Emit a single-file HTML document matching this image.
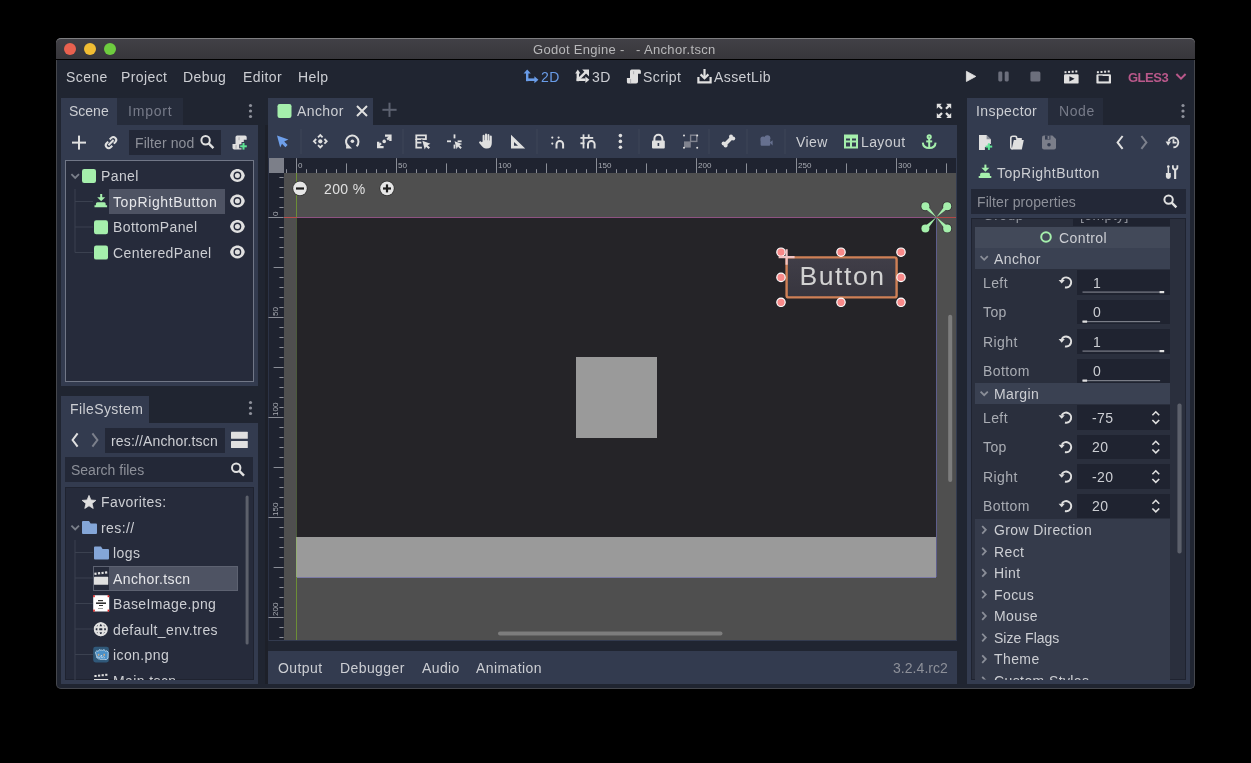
<!DOCTYPE html>
<html><head><meta charset="utf-8"><style>
*{box-sizing:border-box;margin:0;padding:0}
html,body{width:1251px;height:763px;background:#000;overflow:hidden;font-family:"Liberation Sans",sans-serif;font-size:14px;color:#ccced3;position:relative}
div{position:absolute}
#ov{position:absolute;left:0;top:0;width:1251px;height:763px;overflow:visible}
.t{white-space:nowrap;line-height:16px;will-change:transform;letter-spacing:0.4px}
.dim{color:#8d9099}
</style></head><body>
<div style="left:56px;top:38px;width:1139px;height:651px;background:#202531;border-radius:5px;border:1px solid #45474d;border-top:none"></div>
<div style="left:56px;top:38px;width:1139px;height:22px;background:linear-gradient(#414046,#37363b);border-top:1px solid #7e7e80;border-radius:5px 5px 0 0;border-bottom:1px solid #000"></div>
<div style="left:64px;top:43px;width:12px;height:12px;background:#e9614f;border-radius:50%"></div>
<div style="left:84px;top:43px;width:12px;height:12px;background:#f1bd33;border-radius:50%"></div>
<div style="left:104px;top:43px;width:12px;height:12px;background:#6ecc3f;border-radius:50%"></div>
<div class="t" style="left:533px;top:41.5px;color:#b8b8ba;font-size:13px;letter-spacing:0.3px">Godot Engine -</div>
<div class="t" style="left:635.5px;top:41.5px;color:#b8b8ba;font-size:13px;letter-spacing:0.35px">- Anchor.tscn</div>
<div class="t" style="left:66px;top:69px;">Scene</div>
<div class="t" style="left:121px;top:69px;">Project</div>
<div class="t" style="left:183px;top:69px;">Debug</div>
<div class="t" style="left:243px;top:69px;">Editor</div>
<div class="t" style="left:298px;top:69px;">Help</div>
<div class="t" style="left:541px;top:69px;color:#699ce8;">2D</div>
<div class="t" style="left:592px;top:69px;">3D</div>
<div class="t" style="left:643px;top:69px;">Script</div>
<div class="t" style="left:714px;top:69px;">AssetLib</div>
<div class="t" style="left:1128px;top:70px;color:#b9588a;font-size:13px;font-weight:bold;letter-spacing:-0.5px">GLES3</div>
<div style="left:61px;top:98px;width:56px;height:27px;background:#333b4f;"></div>
<div style="left:117px;top:98px;width:66px;height:27px;background:#262c3b;"></div>
<div class="t" style="left:69px;top:103px;letter-spacing:0px">Scene</div>
<div class="t" style="left:128px;top:103px;color:#777b89;letter-spacing:0.8px">Import</div>
<div style="left:61px;top:125px;width:197px;height:261px;background:#333b4f;"></div>
<div style="left:129px;top:130px;width:92px;height:25px;background:#232837;"></div>
<div class="t" style="left:135px;top:135px;color:#8d9099;letter-spacing:0.1px">Filter nod</div>
<div style="left:65px;top:160px;width:189px;height:222px;background:#262b3b;border:1px solid #717787"></div>
<div class="t" style="left:101px;top:168px;">Panel</div>
<div style="left:109px;top:189px;width:116px;height:25px;background:#4e5363;"></div>
<div class="t" style="left:113px;top:194px;color:#e6e7ea;letter-spacing:0.62px">TopRightButton</div>
<div class="t" style="left:113px;top:219px;">BottomPanel</div>
<div class="t" style="left:113px;top:245px;">CenteredPanel</div>
<div style="left:61px;top:396px;width:88px;height:27px;background:#333b4f;"></div>
<div class="t" style="left:70px;top:401px;">FileSystem</div>
<div style="left:61px;top:423px;width:197px;height:261px;background:#333b4f;"></div>
<div style="left:105px;top:428px;width:120px;height:25px;background:#232837;"></div>
<div class="t" style="left:111px;top:433px;letter-spacing:0.15px">res://Anchor.tscn</div>
<div style="left:65px;top:457px;width:188px;height:25px;background:#232837;"></div>
<div class="t" style="left:71px;top:462px;color:#8d9099;letter-spacing:0px">Search files</div>
<div style="left:65px;top:487px;width:189px;height:193px;background:#262b3b;border:1px solid #1f2330"></div>
<div class="t" style="left:101px;top:494px;">Favorites:</div>
<div class="t" style="left:101px;top:520px;">res://</div>
<div class="t" style="left:113px;top:545px;">logs</div>
<div style="left:93px;top:566px;width:145px;height:25px;background:#262b3b;border:1px solid #5d6271"></div>
<div style="left:109px;top:567px;width:128px;height:23px;background:#4e5363;"></div>
<div class="t" style="left:113px;top:571px;color:#e6e7ea;">Anchor.tscn</div>
<div class="t" style="left:113px;top:596px;">BaseImage.png</div>
<div class="t" style="left:113px;top:622px;">default_env.tres</div>
<div class="t" style="left:113px;top:647px;">icon.png</div>
<div style="left:113px;top:672px;width:100px;height:8px;overflow:hidden"><div class="t" style="left:0;top:1px">Main.tscn</div></div>
<div style="left:268px;top:98px;width:105px;height:27px;background:#333b4f;"></div>
<div class="t" style="left:297px;top:103px;">Anchor</div>
<div style="left:268px;top:125px;width:689px;height:33px;background:#333b4f;"></div>
<div style="left:265px;top:125px;width:3px;height:559px;background:#1d2029;"></div>
<div style="left:268px;top:158px;width:689px;height:483px;background:#333b4f;"></div>
<div style="left:268px;top:158px;width:688px;height:482px;background:#1f2330;"></div>
<div style="left:268px;top:158px;width:1px;height:483px;background:#2c3346;"></div>
<div style="left:269px;top:158px;width:15px;height:15px;background:#7c7f89;"></div>
<div style="left:284px;top:173px;width:672px;height:467px;background:#4f4f4f;"></div>
<div style="left:297px;top:218px;width:639px;height:319px;background:#252428;"></div>
<div style="left:297px;top:537px;width:639px;height:40px;background:#9a9a9a;"></div>
<div style="left:576px;top:357px;width:81px;height:81px;background:#9a9a9a;"></div>
<div class="t" style="left:796px;top:134px;">View</div>
<div class="t" style="left:861px;top:134px;">Layout</div>
<div class="t" style="left:324px;top:181px;color:#e0e0e0;">200 %</div>
<div style="left:268px;top:651px;width:689px;height:33px;background:#333b4f;"></div>
<div class="t" style="left:278px;top:660px;">Output</div>
<div class="t" style="left:340px;top:660px;">Debugger</div>
<div class="t" style="left:422px;top:660px;">Audio</div>
<div class="t" style="left:476px;top:660px;">Animation</div>
<div class="t" style="left:893px;top:659.5px;color:#8d9099;letter-spacing:0.05px">3.2.4.rc2</div>
<div style="left:967px;top:98px;width:81px;height:27px;background:#333b4f;"></div>
<div style="left:1048px;top:98px;width:55px;height:27px;background:#262c3b;"></div>
<div class="t" style="left:976px;top:103px;">Inspector</div>
<div class="t" style="left:1059px;top:103px;color:#777b89;letter-spacing:0.6px">Node</div>
<div style="left:967px;top:125px;width:223px;height:559px;background:#333b4f;"></div>
<div class="t" style="left:997px;top:165px;letter-spacing:0.5px">TopRightButton</div>
<div style="left:971px;top:189px;width:215px;height:25px;background:#232837;"></div>
<div class="t" style="left:977px;top:194px;color:#8d9099;letter-spacing:0.1px">Filter properties</div>
<div style="left:971px;top:218px;width:215px;height:462px;background:#2a2f3d;border:1px solid #1f2330"></div>
<div style="left:972px;top:219px;width:213px;height:460px;overflow:hidden"><div class="t" style="left:11px;top:-12px;color:#8d9099">Group</div><div style="left:101px;top:-1px;width:97px;height:8px;background:#1f2330"></div><div class="t" style="left:108px;top:-12px;color:#8d9099">[empty]</div></div>
<div style="left:975px;top:226.5px;width:195px;height:21.3px;background:#424959;"></div>
<div class="t" style="left:1058.5px;top:229.5px;">Control</div>
<div style="left:975px;top:247.8px;width:195px;height:21.3px;background:#3a4152;"></div>
<div class="t" style="left:994.3px;top:250.6px;">Anchor</div>
<div style="left:1076.6px;top:270px;width:93.4px;height:24.8px;background:#1f2330;"></div>
<div class="t" style="left:982.8px;top:274.6px;color:#a9acb3;">Left</div>
<div class="t" style="left:1093px;top:274.6px;">1</div>
<div style="left:1076.6px;top:299.5px;width:93.4px;height:24.8px;background:#1f2330;"></div>
<div class="t" style="left:982.8px;top:304.1px;color:#a9acb3;">Top</div>
<div class="t" style="left:1093px;top:304.1px;">0</div>
<div style="left:1076.6px;top:329px;width:93.4px;height:24.8px;background:#1f2330;"></div>
<div class="t" style="left:982.8px;top:333.6px;color:#a9acb3;">Right</div>
<div class="t" style="left:1093px;top:333.6px;">1</div>
<div style="left:1076.6px;top:358.5px;width:93.4px;height:24.8px;background:#1f2330;"></div>
<div class="t" style="left:982.8px;top:363.1px;color:#a9acb3;">Bottom</div>
<div class="t" style="left:1093px;top:363.1px;">0</div>
<div style="left:975px;top:383.2px;width:195px;height:21.3px;background:#3a4152;"></div>
<div class="t" style="left:994.3px;top:386px;">Margin</div>
<div style="left:1076.6px;top:405.2px;width:93.4px;height:24.8px;background:#1f2330;"></div>
<div class="t" style="left:982.8px;top:409.8px;color:#a9acb3;">Left</div>
<div class="t" style="left:1092.4px;top:409.8px;">-75</div>
<div style="left:1076.6px;top:434.7px;width:93.4px;height:24.8px;background:#1f2330;"></div>
<div class="t" style="left:982.8px;top:439.3px;color:#a9acb3;">Top</div>
<div class="t" style="left:1092.4px;top:439.3px;">20</div>
<div style="left:1076.6px;top:464.2px;width:93.4px;height:24.8px;background:#1f2330;"></div>
<div class="t" style="left:982.8px;top:468.8px;color:#a9acb3;">Right</div>
<div class="t" style="left:1092.4px;top:468.8px;">-20</div>
<div style="left:1076.6px;top:493.7px;width:93.4px;height:24.8px;background:#1f2330;"></div>
<div class="t" style="left:982.8px;top:498.3px;color:#a9acb3;">Bottom</div>
<div class="t" style="left:1092.4px;top:498.3px;">20</div>
<div style="left:975px;top:518.7px;width:195px;height:161px;background:#353b4b;"></div>
<div style="left:975px;top:518px;width:195px;height:161.5px;overflow:hidden"><div class="t" style="left:19.1px;top:4.00px;">Grow Direction</div><div class="t" style="left:19.1px;top:25.55px;">Rect</div><div class="t" style="left:19.1px;top:47.10px;">Hint</div><div class="t" style="left:19.1px;top:68.65px;">Focus</div><div class="t" style="left:19.1px;top:90.20px;">Mouse</div><div class="t" style="left:19.1px;top:111.75px;letter-spacing:0">Size Flags</div><div class="t" style="left:19.1px;top:133.30px;">Theme</div><div class="t" style="left:19.1px;top:154.85px;">Custom Styles</div></div>
<svg id="ov" width="1251" height="763" viewBox="0 0 1251 763">
<g fill="#699ce8"><rect x="526" y="72" width="2.4" height="9.2"/><rect x="526" y="78.4" width="9" height="2.6"/><path d="M523.6 73.6 L527.2 69.4 L530.8 73.6Z"/><path d="M534.4 76.2 L538.4 79.7 L534.4 83.2Z"/></g>
<g fill="#e0e0e0"><rect x="576.6" y="72" width="2.4" height="9.2"/><rect x="576.6" y="78.4" width="9" height="2.6"/><path d="M575.2 73.6 L577.8 69.4 L580.4 73.6Z"/><path d="M585.4 76.4 L589.4 79.7 L585.4 83Z"/><path d="M578.4 79.4 L586 71.8" stroke="#e0e0e0" stroke-width="2.4"/><path d="M582.2 69.6 L589 69.6 L589 76.4Z"/></g>
<path fill="#e0e0e0" d="M631.8 69.5 h7.4 a1.7 1.7 0 0 1 1.7 1.7 v2.6 h-2.9 v8 a1.8 1.8 0 0 1 -1.8 1.8 h-7.6 a1.7 1.7 0 0 1 -1.7 -1.7 v-3.8 h3.1 v-6.9 a1.7 1.7 0 0 1 1.8 -1.7Z"/>
<g fill="#a9a9ad"><rect x="633.2" y="71.2" width="0.9" height="3"/><rect x="630.2" y="79" width="0.9" height="4"/></g>
<g fill="none" stroke="#e0e0e0" stroke-width="2.2"><path d="M698.4 77 v5.4 h12.2 v-5.4"/><path d="M704.5 69 v9"/><path d="M700.6 74.4 l3.9 3.9 l3.9 -3.9"/></g>
<path fill="#e0e0e0" d="M966.4 71.3 L975.8 76.4 L966.4 81.5Z" stroke="#e0e0e0" stroke-width="0.8" stroke-linejoin="round"/>
<g fill="#6c6f7c"><rect x="998.3" y="71.6" width="4" height="9.8" rx="1.3"/><rect x="1004.7" y="71.6" width="4" height="9.8" rx="1.3"/><rect x="1030.4" y="71.6" width="10" height="9.8" rx="1.5"/></g>
<g fill="#e0e0e0"><rect x="1064.5" y="71.20" width="2" height="2"/><rect x="1068.1" y="70.95" width="2" height="2"/><rect x="1071.7" y="70.70" width="2" height="2"/><rect x="1075.3" y="70.45" width="2" height="2"/><rect x="1064" y="74.19999999999999" width="14.6" height="9.4" rx="1.2"/></g><path fill="#202531" d="M1069.4 76.2 L1074.6 78.8 L1069.4 81.4Z"/>
<g fill="#e0e0e0"><rect x="1096.9" y="71.20" width="2" height="2"/><rect x="1100.5" y="70.95" width="2" height="2"/><rect x="1104.1" y="70.70" width="2" height="2"/><rect x="1107.7" y="70.45" width="2" height="2"/><rect x="1096.4" y="74.19999999999999" width="14.6" height="9.4" rx="1.2"/></g><rect fill="#202531" x="1098.6" y="76" width="10.2" height="5.4"/><rect fill="#202531" x="1098.6" y="75.6" width="4" height="1"/>
<path fill="none" stroke="#b9588a" stroke-width="2" d="M1176.4 74 l4.6 4.6 l4.6 -4.6"/>
<g fill="#8e919b"><circle cx="250.5" cy="105.5" r="1.6"/><circle cx="250.5" cy="111" r="1.6"/><circle cx="250.5" cy="116.5" r="1.6"/></g>
<g fill="#8e919b"><circle cx="250.5" cy="402.5" r="1.6"/><circle cx="250.5" cy="408" r="1.6"/><circle cx="250.5" cy="413.5" r="1.6"/></g>
<g fill="#8e919b"><circle cx="1183" cy="105.5" r="1.6"/><circle cx="1183" cy="111" r="1.6"/><circle cx="1183" cy="116.5" r="1.6"/></g>
<g fill="#e0e0e0"><rect x="72" y="141.6" width="14" height="2"/><rect x="78" y="135.6" width="2" height="14"/></g>
<g fill="none" stroke="#e0e0e0" stroke-width="2"><path d="M108.2 141.6 l-1.6 1.6 a2.9 2.9 0 0 0 4.1 4.1 l1.6 -1.6"/><path d="M113.8 143.6 l1.6 -1.6 a2.9 2.9 0 0 0 -4.1 -4.1 l-1.6 1.6"/><path d="M108.4 145.2 l5.2 -5.2"/></g>
<g fill="none" stroke="#e0e0e0" stroke-width="2"><circle cx="205.6" cy="140.3" r="4.2"/><path d="M208.4 143.10000000000002 l5 5" stroke-width="2.4"/></g>
<g fill="none" stroke="#e0e0e0" stroke-width="2"><circle cx="236.2" cy="467.8" r="4.2"/><path d="M239.0 470.6 l5 5" stroke-width="2.4"/></g>
<g fill="none" stroke="#e0e0e0" stroke-width="2"><circle cx="1168.6" cy="199.6" r="4.2"/><path d="M1171.3999999999999 202.4 l5 5" stroke-width="2.4"/></g>
<path fill="#e0e0e0" d="M237.2 135.5 h7.8 a1.7 1.7 0 0 1 1.7 1.7 v2.5 h-2.9 v8 a1.7 1.7 0 0 1 -1.7 1.7 h-7.9 a1.7 1.7 0 0 1 -1.7 -1.7 v-3.6 h3 v-6.9 a1.7 1.7 0 0 1 1.7 -1.7Z"/>
<g fill="#a9a9ad"><rect x="238.6" y="137.2" width="0.9" height="3"/><rect x="235.6" y="145" width="0.9" height="3.6"/></g>
<g fill="#333b4f"><rect x="239.2" y="144.3" width="8.6" height="4"/><rect x="241.5" y="142" width="4" height="8.6"/></g>
<g fill="#5fe596"><rect x="240.2" y="145.3" width="6.6" height="2"/><rect x="242.5" y="143" width="2" height="6.6"/></g>
<path fill="none" stroke="#7a7f8a" stroke-width="1.8" d="M71.4 174.2 l3.8 3.8 l3.8 -3.8"/>
<path fill="none" stroke="#7a7f8a" stroke-width="1.8" d="M71.4 525.6 l3.8 3.8 l3.8 -3.8"/>
<g stroke="#3b4150" stroke-width="1" fill="none"><path d="M75 189 V252.5 M75 201.5 H93 M75 227 H93 M75 252.5 H93"/><path d="M75 540 V680 M75 552.5 H93 M75 578 H93 M75 603.5 H93 M75 629 H93 M75 654.5 H93"/></g>
<rect x="82" y="169" width="14" height="14" rx="2.2" fill="#a5efac"/>
<rect x="94" y="220.3" width="14" height="14" rx="2.2" fill="#a5efac"/>
<rect x="94" y="245.6" width="14" height="14" rx="2.2" fill="#a5efac"/>
<rect x="277.5" y="104" width="14" height="14" rx="2.2" fill="#a5efac"/>
<g fill="#a5efac"><rect x="100.2" y="194" width="2" height="4"/><path d="M97.2 197.2 h8 l-4 4z"/><path d="M97.8 202.2 h6.4 a1.5 1.5 0 0 1 1.5 1.5 v1.6 h1.4 v2 h-12.6 v-2 h1.4 v-1.6 a1.5 1.5 0 0 1 1.5 -1.5z"/></g>
<g fill="#a5efac"><rect x="984.4" y="164.6" width="2" height="4"/><path d="M981.4 167.79999999999998 h8 l-4 4z"/><path d="M982 172.79999999999998 h6.4 a1.5 1.5 0 0 1 1.5 1.5 v1.6 h1.4 v2 h-12.6 v-2 h1.4 v-1.6 a1.5 1.5 0 0 1 1.5 -1.5z"/></g>
<g><path fill="#e0e0e0" d="M230.0 175.5 C231.8 166.9 243.0 166.9 244.8 175.5 C243.0 184.1 231.8 184.1 230.0 175.5Z"/><circle cx="237.4" cy="175.5" r="3.9" fill="#262b3b"/><circle cx="237.4" cy="175.5" r="2.5" fill="#e0e0e0"/></g>
<g><path fill="#e0e0e0" d="M230.0 201.0 C231.8 192.4 243.0 192.4 244.8 201.0 C243.0 209.6 231.8 209.6 230.0 201.0Z"/><circle cx="237.4" cy="201.0" r="3.9" fill="#262b3b"/><circle cx="237.4" cy="201.0" r="2.5" fill="#e0e0e0"/></g>
<g><path fill="#e0e0e0" d="M230.0 226.5 C231.8 217.9 243.0 217.9 244.8 226.5 C243.0 235.1 231.8 235.1 230.0 226.5Z"/><circle cx="237.4" cy="226.5" r="3.9" fill="#262b3b"/><circle cx="237.4" cy="226.5" r="2.5" fill="#e0e0e0"/></g>
<g><path fill="#e0e0e0" d="M230.0 252.0 C231.8 243.4 243.0 243.4 244.8 252.0 C243.0 260.6 231.8 260.6 230.0 252.0Z"/><circle cx="237.4" cy="252.0" r="3.9" fill="#262b3b"/><circle cx="237.4" cy="252.0" r="2.5" fill="#e0e0e0"/></g>
<path fill="none" stroke="#e0e0e0" stroke-width="2" d="M77.6 433.4 L72.6 440 L77.6 446.6"/>
<path fill="none" stroke="#7c808c" stroke-width="2" d="M92.4 433.4 L97.4 440 L92.4 446.6"/>
<g fill="#e0e0e0"><rect x="231" y="431.8" width="16.8" height="7" rx="0.5"/><rect x="231" y="441" width="16.8" height="7" rx="0.5"/></g>
<polygon fill="#e0e0e0" points="89.00,495.40 90.88,500.01 95.85,500.38 92.04,503.59 93.23,508.42 89.00,505.80 84.77,508.42 85.96,503.59 82.15,500.38 87.12,500.01" stroke="#e0e0e0" stroke-width="0.8" stroke-linejoin="round"/>
<path fill="#84a6d8" d="M82 522 a1 1 0 0 1 1 -1 h6 l1.6 2.4 h5.4 a1 1 0 0 1 1 1 v8.6 a1 1 0 0 1 -1 1 h-13 a1 1 0 0 1 -1 -1z"/>
<path fill="#84a6d8" d="M94 547.6 a1 1 0 0 1 1 -1 h6 l1.6 2.4 h5.4 a1 1 0 0 1 1 1 v8.6 a1 1 0 0 1 -1 1 h-13 a1 1 0 0 1 -1 -1z"/>
<g fill="#e0e0e0"><rect x="94.4" y="572.60" width="2.2" height="2.2" transform="rotate(-8 95.5 573.7)"/><rect x="98.0" y="572.20" width="2.2" height="2.2" transform="rotate(-8 99.1 573.7)"/><rect x="101.6" y="571.80" width="2.2" height="2.2" transform="rotate(-8 102.7 573.7)"/><rect x="105.2" y="571.40" width="2.2" height="2.2" transform="rotate(-8 106.3 573.7)"/><rect x="94" y="576.8000000000001" width="14.2" height="8" rx="0.6"/></g>
<rect x="93.2" y="595.2" width="16" height="16.4" rx="1.2" fill="#ffffff"/>
<g fill="#e02020"><rect x="93.2" y="595.2" width="1.6" height="2"/><rect x="107.6" y="595.2" width="1.6" height="2"/><rect x="93.2" y="609.6" width="1.6" height="2"/><rect x="107.6" y="609.6" width="1.6" height="2"/></g>
<g fill="#333"><rect x="98" y="600" width="5" height="1.2"/><rect x="96" y="602.4" width="10" height="1.6"/><rect x="99" y="605" width="4" height="1"/><rect x="98" y="608.2" width="5" height="0.8" fill="#888"/></g>
<g fill="none" stroke="#e0e0e0" stroke-width="1.9"><circle cx="100.8" cy="629.2" r="6.1"/><ellipse cx="100.8" cy="629.2" rx="2.5" ry="6.1"/><path d="M94.8 627.2 h12 M94.8 631.2 h12"/></g>
<rect x="93.2" y="646.7" width="15.7" height="15.7" rx="2.4" fill="#30597a"/>
<path fill="#4a90c8" stroke="#b8d4ea" stroke-width="0.9" d="M95.4 652.2 l1.4 -1.4 l1.4 0.6 l1.2 -1.8 l1.6 0.8 l0.8 -0.4 l0.8 0.4 l1.6 -0.8 l1.2 1.8 l1.4 -0.6 l1.4 1.4 l-0.2 6 q-1.2 1.8 -3 1.4 l-1 -0.6 l-1 0.6 l-1 -0.6 l-1 0.6 l-1 -0.6 q-1.8 0.4 -3 -1.4z"/>
<g fill="#c9a684"><rect x="97.8" y="653.8" width="1.6" height="2"/><rect x="103.4" y="653.8" width="1.6" height="2"/></g><circle cx="101.4" cy="655.8" r="0.8" fill="#d8e8f4"/>
<path fill="none" stroke="#c8dcee" stroke-width="0.8" d="M96.4 657.6 l1.4 -0.8 l1.4 0.8 l1.4 -0.8 l1.4 0.8 l1.4 -0.8 l1.4 0.8"/>
<g fill="#e0e0e0"><rect x="94.4" y="675" width="2.2" height="2"/><rect x="98" y="674.6" width="2.2" height="2"/><rect x="101.6" y="674.2" width="2.2" height="2"/><rect x="105.2" y="673.8" width="2.2" height="2"/><rect x="94" y="679" width="14.2" height="1"/></g>
<rect x="245.6" y="495.5" width="3" height="149" rx="1.5" fill="#5c606b"/>
<path stroke="#e0e0e0" stroke-width="2" d="M357 106 L367 116 M367 106 L357 116"/>
<g fill="#5d6270"><rect x="382.4" y="108.8" width="14.2" height="2"/><rect x="388.5" y="102.7" width="2" height="14.2"/></g>
<g fill="#e0e0e0"><path d="M936.8 103.8 h5 l-1.6 1.6 l2.6 2.6 l-1.6 1.6 l-2.6 -2.6 l-1.8 1.8z"/><path d="M951.2 103.8 h-5 l1.6 1.6 l-2.6 2.6 l1.6 1.6 l2.6 -2.6 l1.8 1.8z"/><path d="M936.8 118 h5 l-1.6 -1.6 l2.6 -2.6 l-1.6 -1.6 l-2.6 2.6 l-1.8 -1.8z"/><path d="M951.2 118 h-5 l1.6 -1.6 l-2.6 -2.6 l1.6 -1.6 l2.6 2.6 l1.8 -1.8z"/></g>
<rect x="300.5" y="129" width="1" height="25" fill="#3f4658"/>
<rect x="402.5" y="129" width="1" height="25" fill="#3f4658"/>
<rect x="536.5" y="129" width="1" height="25" fill="#3f4658"/>
<rect x="638.5" y="129" width="1" height="25" fill="#3f4658"/>
<rect x="708.5" y="129" width="1" height="25" fill="#3f4658"/>
<rect x="746.5" y="129" width="1" height="25" fill="#3f4658"/>
<rect x="784.5" y="129" width="1" height="25" fill="#3f4658"/>
<path fill="#6e9fea" d="M277 135.4 L288.4 139.6 L284.2 141.6 L287.6 145 L285.4 147.2 L282 143.8 L280.2 147.6Z"/>
<g><circle cx="320.3" cy="141.3" r="2.1" fill="#e0e0e0"/><g fill="none" stroke="#e0e0e0" stroke-width="1.8"><path d="M318 137.4 l2.3 -2.3 l2.3 2.3"/><path d="M318 145.2 l2.3 2.3 l2.3 -2.3"/><path d="M316.2 139 l-2.3 2.3 l2.3 2.3"/><path d="M324.4 139 l2.3 2.3 l-2.3 2.3"/></g></g>
<g><path fill="none" stroke="#e0e0e0" stroke-width="2" d="M348.4 146.6 A6.2 6.2 0 1 1 356.6 146.2"/><circle cx="352.4" cy="141.2" r="1.8" fill="#e0e0e0"/><path fill="#e0e0e0" d="M346 148.6 L352 148.6 L346.6 142.8Z"/></g>
<g fill="#e0e0e0"><path d="M391.6 134.4 v6.6 h-2.4 v-4.2 h-4.2 v-2.4z"/><path d="M377 148.3 v-6.6 h2.4 v4.2 h4.2 v2.4z"/><path d="M389.6 135.6 l1.6 1.6 l-3.2 3.2 l-1.6 -1.6z M378.6 147.2 l-1.6 -1.6 l3.2 -3.2 l1.6 1.6z"/><circle cx="384.2" cy="141.4" r="1.8"/></g>
<g fill="none" stroke="#e0e0e0" stroke-width="1.8"><path d="M416.3 135.3 h9.6 v3.9 h-9.6z"/><path d="M416.3 139 v8.6 h5.6"/><path d="M416.3 142.6 h5.2"/></g>
<path fill="#333b4f" stroke="#333b4f" stroke-width="2" d="M422.4 140.8 L430.4 143.8 L427.6 145.2 L430 147.6 L428.5 149.1 L426.1 146.7 L424.7 149.4Z"/>
<path fill="#e0e0e0" d="M422.4 140.8 L430.4 143.8 L427.6 145.2 L430 147.6 L428.5 149.1 L426.1 146.7 L424.7 149.4Z"/>
<g fill="#e0e0e0"><rect x="453.6" y="134.4" width="1.8" height="4"/><rect x="447" y="140.4" width="4" height="1.8"/><rect x="457.6" y="140.4" width="4" height="1.8"/><rect x="453.6" y="144.6" width="1.8" height="4"/><path d="M454.6 141.2 L462.2 144 L459.4 145.3 L461.8 147.6 L460.4 149 L458 146.6 L456.6 149.2Z"/></g>
<path fill="#e0e0e0" d="M482.6 141.4 v-5.6 a1 1 0 0 1 2 0 v4.4 h0.4 v-5.8 a1 1 0 0 1 2 0 v5.8 h0.4 v-5.2 a1 1 0 0 1 2 0 v5.4 h0.4 v-3.8 a1 1 0 0 1 2 0 v6.4 q0 5.6 -5 5.6 h-1 q-2 0 -3.6 -2 l-3 -3.6 q-0.6 -1.2 0.6 -1.6 q1 -0.2 2 0.8z"/>
<path fill="#e0e0e0" fill-rule="evenodd" d="M511 134.8 L525.2 148.6 H511Z M514 142 V145.8 H518Z"/>
<g fill="#e0e0e0"><circle cx="552.3" cy="137.6" r="1.1"/><circle cx="558.6" cy="137.6" r="1.1"/><circle cx="552.3" cy="143.6" r="1.1"/></g>
<path fill="none" stroke="#e0e0e0" stroke-width="2" d="M556.5 148.4 v-4.2 a3.3 3.3 0 0 1 6.6 0 v4.2"/>
<g fill="#e0e0e0"><rect x="580.4" y="137" width="12.8" height="1.8"/><rect x="580.4" y="142.4" width="4" height="1.8"/><rect x="582.6" y="134.4" width="1.8" height="14"/><rect x="587.8" y="134.4" width="1.8" height="4"/></g>
<path fill="none" stroke="#e0e0e0" stroke-width="2" d="M588 148.4 v-4.2 a3.3 3.3 0 0 1 6.6 0 v4.2"/>
<g fill="#e0e0e0"><circle cx="620.4" cy="135.6" r="1.8"/><circle cx="620.4" cy="141.4" r="1.8"/><circle cx="620.4" cy="147.2" r="1.8"/></g>
<g><path fill="none" stroke="#e0e0e0" stroke-width="2" d="M654.4 141 v-2.2 a4 4 0 0 1 8 0 v2.2"/><rect x="652" y="140.4" width="12.8" height="8.2" rx="1" fill="#e0e0e0"/><rect x="657.6" y="143" width="1.6" height="3" fill="#333b4f"/></g>
<g fill="#80838f"><rect x="684" y="141.4" width="6.8" height="6.2"/></g><g fill="none" stroke="#80838f" stroke-width="1.4"><rect x="690.6" y="135.2" width="6.2" height="6.2"/></g>
<g fill="#e0e0e0"><circle cx="684" cy="135.4" r="1"/><circle cx="697.2" cy="135.4" r="1"/><circle cx="684" cy="147.8" r="1"/><circle cx="697.2" cy="147.8" r="1"/></g>
<g fill="#e0e0e0"><path d="M724.8 143.2 l5.4 -5.4 l1.8 1.8 l-5.4 5.4z"/><circle cx="723.6" cy="143.4" r="2"/><circle cx="725.6" cy="145.6" r="2"/><circle cx="731" cy="136.6" r="2"/><circle cx="733.2" cy="138.6" r="2"/></g>
<path stroke="#e0e0e0" stroke-width="3.4" d="M724.2 145.2 L732.2 137.2"/>
<g fill="#66708f"><circle cx="763" cy="139" r="2.6"/><circle cx="767.4" cy="138.2" r="3"/><rect x="760.6" y="139.4" width="9.6" height="6.4" rx="1"/><path d="M769.6 142.6 l3 -2.4 v5.2z"/></g>
<g fill="none" stroke="#a5efac" stroke-width="2"><rect x="845" y="135.5" width="12" height="12"/><path d="M851 136 V147 M845.5 141.5 H856.5"/></g>
<rect x="845" y="135.5" width="12" height="3" fill="#a5efac"/>
<g fill="none" stroke="#a5efac" stroke-width="2"><circle cx="929.2" cy="136.8" r="1.6"/><path d="M929.2 138.6 V148"/><path d="M922.8 142.6 q0.4 5.4 6.4 5.4 q6 0 6.4 -5.4"/><path d="M926.2 141.4 H932.2"/></g>
<g fill="#8a8d96"><rect x="286.0" y="169.2" width="1" height="3.8"/><rect x="296.0" y="158.2" width="1" height="14.8"/><rect x="306.0" y="169.2" width="1" height="3.8"/><rect x="316.0" y="169.2" width="1" height="3.8"/><rect x="326.0" y="169.2" width="1" height="3.8"/><rect x="336.0" y="169.2" width="1" height="3.8"/><rect x="346.0" y="163.4" width="1" height="9.6"/><rect x="356.0" y="169.2" width="1" height="3.8"/><rect x="366.0" y="169.2" width="1" height="3.8"/><rect x="376.0" y="169.2" width="1" height="3.8"/><rect x="386.0" y="169.2" width="1" height="3.8"/><rect x="396.0" y="158.2" width="1" height="14.8"/><rect x="406.0" y="169.2" width="1" height="3.8"/><rect x="416.0" y="169.2" width="1" height="3.8"/><rect x="426.0" y="169.2" width="1" height="3.8"/><rect x="436.0" y="169.2" width="1" height="3.8"/><rect x="446.0" y="163.4" width="1" height="9.6"/><rect x="456.0" y="169.2" width="1" height="3.8"/><rect x="466.0" y="169.2" width="1" height="3.8"/><rect x="476.0" y="169.2" width="1" height="3.8"/><rect x="486.0" y="169.2" width="1" height="3.8"/><rect x="496.0" y="158.2" width="1" height="14.8"/><rect x="506.0" y="169.2" width="1" height="3.8"/><rect x="516.0" y="169.2" width="1" height="3.8"/><rect x="526.0" y="169.2" width="1" height="3.8"/><rect x="536.0" y="169.2" width="1" height="3.8"/><rect x="546.0" y="163.4" width="1" height="9.6"/><rect x="556.0" y="169.2" width="1" height="3.8"/><rect x="566.0" y="169.2" width="1" height="3.8"/><rect x="576.0" y="169.2" width="1" height="3.8"/><rect x="586.0" y="169.2" width="1" height="3.8"/><rect x="596.0" y="158.2" width="1" height="14.8"/><rect x="606.0" y="169.2" width="1" height="3.8"/><rect x="616.0" y="169.2" width="1" height="3.8"/><rect x="626.0" y="169.2" width="1" height="3.8"/><rect x="636.0" y="169.2" width="1" height="3.8"/><rect x="646.0" y="163.4" width="1" height="9.6"/><rect x="656.0" y="169.2" width="1" height="3.8"/><rect x="666.0" y="169.2" width="1" height="3.8"/><rect x="676.0" y="169.2" width="1" height="3.8"/><rect x="686.0" y="169.2" width="1" height="3.8"/><rect x="696.0" y="158.2" width="1" height="14.8"/><rect x="706.0" y="169.2" width="1" height="3.8"/><rect x="716.0" y="169.2" width="1" height="3.8"/><rect x="726.0" y="169.2" width="1" height="3.8"/><rect x="736.0" y="169.2" width="1" height="3.8"/><rect x="746.0" y="163.4" width="1" height="9.6"/><rect x="756.0" y="169.2" width="1" height="3.8"/><rect x="766.0" y="169.2" width="1" height="3.8"/><rect x="776.0" y="169.2" width="1" height="3.8"/><rect x="786.0" y="169.2" width="1" height="3.8"/><rect x="796.0" y="158.2" width="1" height="14.8"/><rect x="806.0" y="169.2" width="1" height="3.8"/><rect x="816.0" y="169.2" width="1" height="3.8"/><rect x="826.0" y="169.2" width="1" height="3.8"/><rect x="836.0" y="169.2" width="1" height="3.8"/><rect x="846.0" y="163.4" width="1" height="9.6"/><rect x="856.0" y="169.2" width="1" height="3.8"/><rect x="866.0" y="169.2" width="1" height="3.8"/><rect x="876.0" y="169.2" width="1" height="3.8"/><rect x="886.0" y="169.2" width="1" height="3.8"/><rect x="896.0" y="158.2" width="1" height="14.8"/><rect x="906.0" y="169.2" width="1" height="3.8"/><rect x="916.0" y="169.2" width="1" height="3.8"/><rect x="926.0" y="169.2" width="1" height="3.8"/><rect x="936.0" y="169.2" width="1" height="3.8"/><rect x="946.0" y="163.4" width="1" height="9.6"/><rect x="279.4" y="177.0" width="4.2" height="1"/><rect x="279.4" y="187.0" width="4.2" height="1"/><rect x="279.4" y="197.0" width="4.2" height="1"/><rect x="279.4" y="207.0" width="4.2" height="1"/><rect x="268.4" y="217.0" width="15.2" height="1"/><rect x="279.4" y="227.0" width="4.2" height="1"/><rect x="279.4" y="237.0" width="4.2" height="1"/><rect x="279.4" y="247.0" width="4.2" height="1"/><rect x="279.4" y="257.0" width="4.2" height="1"/><rect x="273.6" y="267.0" width="10.0" height="1"/><rect x="279.4" y="277.0" width="4.2" height="1"/><rect x="279.4" y="287.0" width="4.2" height="1"/><rect x="279.4" y="297.0" width="4.2" height="1"/><rect x="279.4" y="307.0" width="4.2" height="1"/><rect x="268.4" y="317.0" width="15.2" height="1"/><rect x="279.4" y="327.0" width="4.2" height="1"/><rect x="279.4" y="337.0" width="4.2" height="1"/><rect x="279.4" y="347.0" width="4.2" height="1"/><rect x="279.4" y="357.0" width="4.2" height="1"/><rect x="273.6" y="367.0" width="10.0" height="1"/><rect x="279.4" y="377.0" width="4.2" height="1"/><rect x="279.4" y="387.0" width="4.2" height="1"/><rect x="279.4" y="397.0" width="4.2" height="1"/><rect x="279.4" y="407.0" width="4.2" height="1"/><rect x="268.4" y="417.0" width="15.2" height="1"/><rect x="279.4" y="427.0" width="4.2" height="1"/><rect x="279.4" y="437.0" width="4.2" height="1"/><rect x="279.4" y="447.0" width="4.2" height="1"/><rect x="279.4" y="457.0" width="4.2" height="1"/><rect x="273.6" y="467.0" width="10.0" height="1"/><rect x="279.4" y="477.0" width="4.2" height="1"/><rect x="279.4" y="487.0" width="4.2" height="1"/><rect x="279.4" y="497.0" width="4.2" height="1"/><rect x="279.4" y="507.0" width="4.2" height="1"/><rect x="268.4" y="517.0" width="15.2" height="1"/><rect x="279.4" y="527.0" width="4.2" height="1"/><rect x="279.4" y="537.0" width="4.2" height="1"/><rect x="279.4" y="547.0" width="4.2" height="1"/><rect x="279.4" y="557.0" width="4.2" height="1"/><rect x="273.6" y="567.0" width="10.0" height="1"/><rect x="279.4" y="577.0" width="4.2" height="1"/><rect x="279.4" y="587.0" width="4.2" height="1"/><rect x="279.4" y="597.0" width="4.2" height="1"/><rect x="279.4" y="607.0" width="4.2" height="1"/><rect x="268.4" y="617.0" width="15.2" height="1"/><rect x="279.4" y="627.0" width="4.2" height="1"/><rect x="279.4" y="637.0" width="4.2" height="1"/></g>
<g fill="#a8abb2" font-family="Liberation Sans" font-size="8"><text x="298" y="168">0</text><text x="398" y="168">50</text><text x="498" y="168">100</text><text x="598" y="168">150</text><text x="698" y="168">200</text><text x="798" y="168">250</text><text x="898" y="168">300</text></g>
<g fill="#a8abb2" font-family="Liberation Sans" font-size="8"><text x="0" y="0" transform="translate(278.4 216) rotate(-90)">0</text><text x="0" y="0" transform="translate(278.4 316) rotate(-90)">50</text><text x="0" y="0" transform="translate(278.4 416) rotate(-90)">100</text><text x="0" y="0" transform="translate(278.4 516) rotate(-90)">150</text><text x="0" y="0" transform="translate(278.4 616) rotate(-90)">200</text></g>
<rect x="296" y="173" width="1" height="467" fill="#6c8e36"/>
<rect x="296" y="218" width="1" height="319" fill="#4b5a3c"/>
<rect x="296" y="537" width="1" height="40" fill="#93ad74"/>
<rect x="284" y="217" width="13" height="1" fill="#b84c4c"/>
<rect x="297" y="217" width="639" height="1" fill="#8e5282"/>
<rect x="936" y="217" width="1" height="360" fill="#5e5e8c"/>
<rect x="297" y="577" width="639" height="1" fill="#7b7aa6"/>
<rect x="936" y="217" width="20" height="1" fill="#b04848"/>
<g><circle cx="300" cy="188.4" r="7.6" fill="#2a2a2a" opacity="0.8"/><circle cx="300" cy="188.4" r="6.8" fill="#e6e6e6"/><rect x="296" y="187.4" width="8" height="2.2" fill="#1e1e1e"/></g>
<g><circle cx="387" cy="188.4" r="7.6" fill="#2a2a2a" opacity="0.8"/><circle cx="387" cy="188.4" r="6.8" fill="#e6e6e6"/><rect x="383" y="187.4" width="8" height="2.2" fill="#1e1e1e"/><rect x="385.9" y="184.4" width="2.2" height="8" fill="#1e1e1e"/></g>
<g fill="none" stroke="#1e1e1e" stroke-width="1.2" opacity="0.55"><circle cx="925.4" cy="206.3" r="4.3"/><circle cx="947.2" cy="206.3" r="4.3"/><circle cx="925.4" cy="228.4" r="4.3"/><circle cx="947.2" cy="228.4" r="4.3"/></g>
<g fill="#a5efac"><path d="M936.3 217.3 L923.9 207.7 L926.9 204.7Z"/><path d="M936.3 217.3 L948.7 207.7 L945.7 204.7Z"/><path d="M936.3 217.3 L923.9 227 L926.9 230Z"/><path d="M936.3 217.3 L948.7 227 L945.7 230Z"/><circle cx="925.4" cy="206.3" r="4"/><circle cx="947.2" cy="206.3" r="4"/><circle cx="925.4" cy="228.4" r="4"/><circle cx="947.2" cy="228.4" r="4"/></g>
<defs><linearGradient id="bg1" x1="0" y1="0" x2="0" y2="1"><stop offset="0" stop-color="#403e48"/><stop offset="1" stop-color="#37353e"/></linearGradient></defs>
<rect x="786.6" y="257.4" width="110" height="40" rx="2" fill="url(#bg1)" stroke="#cf8056" stroke-width="2.4"/>
<text x="799.6" y="285.1" font-family="Liberation Sans" font-size="26.6" fill="#d2d2d2" letter-spacing="1.5">Button</text>
<circle cx="781" cy="252.2" r="4.2" fill="#f88a8a" stroke="#ffffff" stroke-width="1.2"/>
<circle cx="781" cy="277.4" r="4.2" fill="#f88a8a" stroke="#ffffff" stroke-width="1.2"/>
<circle cx="781" cy="302.3" r="4.2" fill="#f88a8a" stroke="#ffffff" stroke-width="1.2"/>
<circle cx="841" cy="252.2" r="4.2" fill="#f88a8a" stroke="#ffffff" stroke-width="1.2"/>
<circle cx="841" cy="302.3" r="4.2" fill="#f88a8a" stroke="#ffffff" stroke-width="1.2"/>
<circle cx="901" cy="252.2" r="4.2" fill="#f88a8a" stroke="#ffffff" stroke-width="1.2"/>
<circle cx="901" cy="277.4" r="4.2" fill="#f88a8a" stroke="#ffffff" stroke-width="1.2"/>
<circle cx="901" cy="302.3" r="4.2" fill="#f88a8a" stroke="#ffffff" stroke-width="1.2"/>
<g stroke="#f0c4c4" stroke-width="2.2"><path d="M786.6 249.2 V264.8 M778.6 257.2 H794.6"/></g>
<rect x="948.2" y="314.8" width="4" height="167.2" rx="2" fill="#7d7d7d"/>
<rect x="498" y="631.4" width="224.5" height="4" rx="2" fill="#7d7d7d"/>
<path fill="#e0e0e0" d="M979 135 h7.6 l4.3 4.3 v4.6 h-3 v3 h-3 v3 h-5.9z"/>
<path fill="#333b4f" d="M986.6 135 v4.3 h4.3z" opacity="0.5"/>
<g fill="#5fe596"><rect x="985.6" y="145.6" width="6.6" height="2"/><rect x="987.9" y="143.3" width="2" height="6.6"/></g>
<g><path fill="none" stroke="#e0e0e0" stroke-width="1.6" d="M1012.6 148.8 a1.6 1.6 0 0 1 -1.8 -1.6 v-9 a2 2 0 0 1 2 -2 h2.4 a1.4 1.4 0 0 1 1.4 1.4 v1.2"/><path fill="#e0e0e0" d="M1013.8 140 h10 l-2 9.4 h-10.2z"/><rect x="1016.2" y="138" width="5.6" height="2.4" fill="#e0e0e0"/></g>
<g><path fill="#7b7e8a" d="M1042 137.4 a2 2 0 0 1 2 -2 h8.4 l3.6 3.6 v8.6 a2 2 0 0 1 -2 2 h-10 a2 2 0 0 1 -2 -2z"/><rect x="1045" y="135.4" width="5.4" height="4.2" fill="#333b4f"/><rect x="1047.6" y="136" width="1.8" height="3.2" fill="#7b7e8a"/><circle cx="1049" cy="144.8" r="1.8" fill="#333b4f"/></g>
<path fill="none" stroke="#e0e0e0" stroke-width="2" d="M1122.6 136 L1117.6 142.4 L1122.6 148.8"/>
<path fill="none" stroke="#7c808c" stroke-width="2" d="M1141.4 136 L1146.4 142.4 L1141.4 148.8"/>
<g><path fill="none" stroke="#e0e0e0" stroke-width="1.9" d="M1168.6 141.4 A4.9 4.9 0 1 1 1173.4 147.3"/><path fill="#e0e0e0" d="M1165.6 141.6 h5.4 l-2.9 4.2z"/><path fill="#e0e0e0" d="M1172.6 139.2 h1.7 v2.6 h2.2 v1.7 h-3.9z"/></g>
<g fill="#e0e0e0"><rect x="1167.6" y="166.4" width="1.5" height="7"/><circle cx="1168.35" cy="166.6" r="1.3"/><path d="M1165.9 173 h4.9 v3.6 a2.45 2.45 0 0 1 -4.9 0z"/><rect x="1174.1" y="169" width="2.1" height="10"/><path fill="none" stroke="#e0e0e0" stroke-width="1.8" d="M1172.9 165.3 v1.9 a2.25 2.25 0 0 0 4.5 0 v-1.9"/></g>
<circle cx="1046" cy="237" r="4.8" fill="none" stroke="#a5efac" stroke-width="2"/>
<g fill="none" stroke="#8a8e98" stroke-width="1.8"><path d="M980.6 256.2 l3.6 3.6 l3.6 -3.6"/><path d="M980.6 391.6 l3.6 3.6 l3.6 -3.6"/></g>
<defs><clipPath id="insclip"><rect x="972" y="219" width="213" height="460.5"/></clipPath></defs>
<g clip-path="url(#insclip)" fill="none" stroke="#8a8e98" stroke-width="1.8"><path d="M982.2 526.0 l3.6 3.8 l-3.6 3.8"/><path d="M982.2 547.55 l3.6 3.8 l-3.6 3.8"/><path d="M982.2 569.1 l3.6 3.8 l-3.6 3.8"/><path d="M982.2 590.65 l3.6 3.8 l-3.6 3.8"/><path d="M982.2 612.2 l3.6 3.8 l-3.6 3.8"/><path d="M982.2 633.75 l3.6 3.8 l-3.6 3.8"/><path d="M982.2 655.3 l3.6 3.8 l-3.6 3.8"/><path d="M982.2 676.85 l3.6 3.8 l-3.6 3.8"/></g>
<g><path fill="none" stroke="#e0e0e0" stroke-width="2" d="M1061.8 280.0 A5 5 0 1 1 1065 287.29999999999995"/><path fill="#e0e0e0" d="M1058.6 280.0 h6.2 l-3.1 3.6z"/></g>
<g><path fill="none" stroke="#e0e0e0" stroke-width="2" d="M1061.8 339.1 A5 5 0 1 1 1065 346.4"/><path fill="#e0e0e0" d="M1058.6 339.1 h6.2 l-3.1 3.6z"/></g>
<g><path fill="none" stroke="#e0e0e0" stroke-width="2" d="M1061.8 415.20000000000005 A5 5 0 1 1 1065 422.5"/><path fill="#e0e0e0" d="M1058.6 415.20000000000005 h6.2 l-3.1 3.6z"/></g>
<g><path fill="none" stroke="#e0e0e0" stroke-width="2" d="M1061.8 444.70000000000005 A5 5 0 1 1 1065 452.0"/><path fill="#e0e0e0" d="M1058.6 444.70000000000005 h6.2 l-3.1 3.6z"/></g>
<g><path fill="none" stroke="#e0e0e0" stroke-width="2" d="M1061.8 474.20000000000005 A5 5 0 1 1 1065 481.5"/><path fill="#e0e0e0" d="M1058.6 474.20000000000005 h6.2 l-3.1 3.6z"/></g>
<g><path fill="none" stroke="#e0e0e0" stroke-width="2" d="M1061.8 503.70000000000005 A5 5 0 1 1 1065 511.0"/><path fill="#e0e0e0" d="M1058.6 503.70000000000005 h6.2 l-3.1 3.6z"/></g>
<rect x="1082.5" y="291.5" width="81.5" height="1.2" fill="#7a7d87"/>
<rect x="1159.6" y="291" width="4.6" height="2.2" fill="#e0e0e0"/>
<rect x="1082.5" y="321.0" width="77.6" height="1.2" fill="#7a7d87"/>
<rect x="1082.5" y="320.5" width="4.6" height="2.2" fill="#e0e0e0"/>
<rect x="1082.5" y="350.5" width="81.5" height="1.2" fill="#7a7d87"/>
<rect x="1159.6" y="350" width="4.6" height="2.2" fill="#e0e0e0"/>
<rect x="1082.5" y="380.0" width="77.6" height="1.2" fill="#7a7d87"/>
<rect x="1082.5" y="379.5" width="4.6" height="2.2" fill="#e0e0e0"/>
<g fill="none" stroke="#e0e0e0" stroke-width="1.6"><path d="M1152.4 415.2 l3.4 -3.4 l3.4 3.4"/><path d="M1152.4 419.99999999999994 l3.4 3.4 l3.4 -3.4"/></g>
<g fill="none" stroke="#e0e0e0" stroke-width="1.6"><path d="M1152.4 444.7 l3.4 -3.4 l3.4 3.4"/><path d="M1152.4 449.49999999999994 l3.4 3.4 l3.4 -3.4"/></g>
<g fill="none" stroke="#e0e0e0" stroke-width="1.6"><path d="M1152.4 474.2 l3.4 -3.4 l3.4 3.4"/><path d="M1152.4 478.99999999999994 l3.4 3.4 l3.4 -3.4"/></g>
<g fill="none" stroke="#e0e0e0" stroke-width="1.6"><path d="M1152.4 503.7 l3.4 -3.4 l3.4 3.4"/><path d="M1152.4 508.49999999999994 l3.4 3.4 l3.4 -3.4"/></g>
<rect x="1177.4" y="403.5" width="4.2" height="149.9" rx="2" fill="#5c606b"/>
</svg>
</body></html>
